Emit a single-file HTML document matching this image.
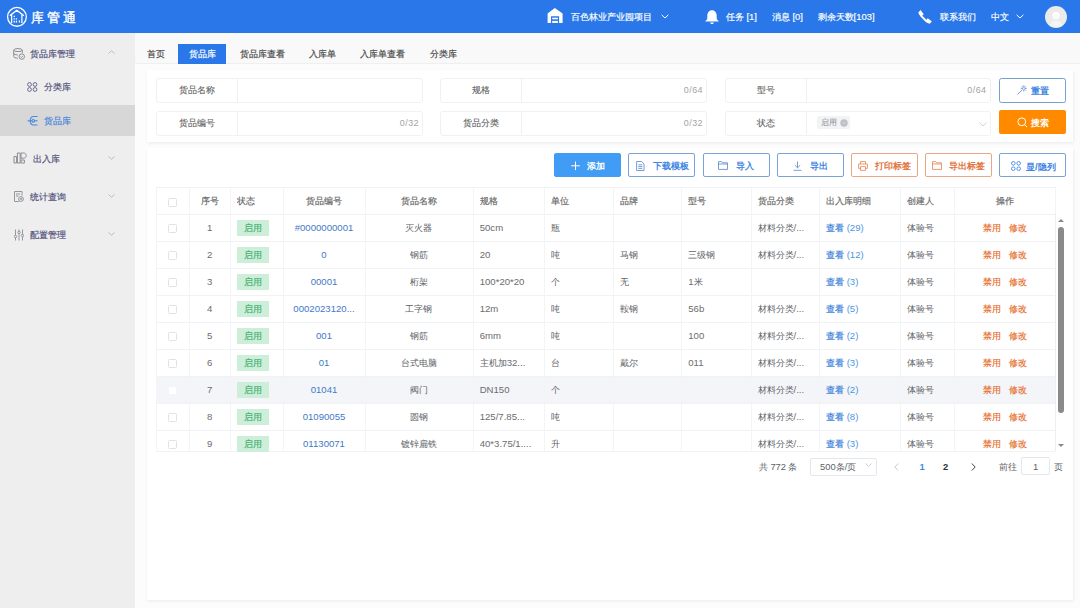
<!DOCTYPE html>
<html><head><meta charset="utf-8">
<style>
*{box-sizing:border-box;margin:0;padding:0}
html,body{width:1080px;height:608px;overflow:hidden;background:#f7f7f7;font-family:"Liberation Sans",sans-serif;font-size:8.7px;color:#606266}
.l{font-size:1.09em}
.abs{position:absolute}
#hdr{position:absolute;left:0;top:0;width:1080px;height:33.4px;background:#2977e8;color:#fff}
#hdr .t{position:absolute;top:10px;line-height:14px;font-size:8.7px;-webkit-text-stroke-width:0.18px;color:#fff;white-space:nowrap}
#side{position:absolute;left:0;top:33px;width:135px;height:575px;background:#eeeeee}
#side .it{position:absolute;line-height:14px;font-size:8.8px;-webkit-text-stroke-width:0.18px;color:#52527c;white-space:nowrap}
#content{position:absolute;left:135px;top:33px;width:945px;height:575px;background:#fcfcfc}
#tabs{position:absolute;left:135px;top:33px;width:945px;height:31px;background:#f9f9f9;border-bottom:1px solid #efefef}
.tab{position:absolute;top:11px;height:20px;line-height:20px;font-size:8.7px;-webkit-text-stroke-width:0.18px;color:#4a4a4a;text-align:center;white-space:nowrap}
.tab.on{background:#2977e8;color:#fff}
.card{position:absolute;background:#fff;box-shadow:0.5px 1px 3px 0.5px rgba(0,0,0,.06)}
.fld{position:absolute;height:25px;border:1px solid #f1f1f3;border-radius:3px;background:#fff}
.fld .lb{position:absolute;left:0;top:0;width:81px;height:23px;line-height:23px;text-align:center;border-right:1px solid #f0f0f2;color:#626262;-webkit-text-stroke-width:0.1px;font-size:8.7px}
.fld .cnt{position:absolute;right:3px;top:0;line-height:23px;font-size:8.2px;letter-spacing:0.45px;color:#a3a3a3}
.btn{position:absolute;top:152.5px;width:67px;height:24px;border:1px solid #79a3d8;border-radius:2px;background:#fff;color:#3f86e3;font-weight:bold;font-size:8.8px;line-height:23px;white-space:nowrap}
.btn.o{border-color:#e8a888;color:#e2743e}
.btn svg{position:absolute}
.btn>span{position:absolute;top:1.6px}
#tbl .hl{position:absolute;left:155.8px;width:899.5px;height:1px;background:#f1f2f4}
#tbl .vl{position:absolute;top:187px;width:1px;height:264px;background:#f3f4f6}
.cell{position:absolute;height:27px;line-height:28.6px;font-size:8.8px;color:#606266;white-space:nowrap;overflow:hidden}
.cell.c{text-align:center}
.cell:not(.blue):not(.lnk) .l{color:#6c6c6e}
.cell.th{color:#6a6a6a;-webkit-text-stroke-width:0.18px;font-size:8.6px}
.cell.blue{color:#4479c8}
.cell.lnk{color:#4f95e0}
.vw{font-weight:normal;-webkit-text-stroke-width:0.2px;color:#3f86dc}
.or{color:#e8702f;-webkit-text-stroke-width:0.18px}
.cb{position:absolute;width:9px;height:9px;border:1px solid #e2e2e6;border-radius:1.5px;background:#fff}
.cb.w{border-color:#f3f5f9}
.tag{position:absolute;width:32px;height:15.5px;line-height:17px;background:#cdeed9;color:#46b072;text-align:center;font-size:8.8px;-webkit-text-stroke-width:0.18px}
</style></head><body>
<div id="content"></div>
<div id="hdr">
  <svg class="abs" style="left:6px;top:6px" width="22" height="22" viewBox="0 0 22 22">
    <circle cx="10.95" cy="10.85" r="9.4" fill="none" stroke="#fff" stroke-width="1.3"/>
    <path d="M4.3 9.2L10.8 4.2L17.3 9.2" fill="none" stroke="#fff" stroke-width="1.4" stroke-linejoin="round" stroke-linecap="round"/>
    <path d="M5.6 8.4V16.9M15.9 8.4V16.9" fill="none" stroke="#fff" stroke-width="1.3"/>
    <path d="M7.6 9.8h1.3v1.3h-1.3zM7.6 12.3h1.3v1.3h-1.3zM9.8 12.3h1.3v1.3h-1.3zM7.6 14.8h1.3v1.6h-1.3zM9.8 14.8h1.3v1.6h-1.3zM12.8 14.6h1.3v1.8h-1.3z" fill="#fff"/>
  </svg>
  <div class="abs" style="left:30.5px;top:9.5px;font-size:13px;letter-spacing:3.4px;line-height:16px;color:#fff;-webkit-text-stroke-width:0.4px">库管通</div>
  <svg class="abs" style="left:547px;top:8px" width="16" height="16" viewBox="0 0 16 16">
    <path d="M7.8 0.1L15.6 5.4V15H12.1V8.2H4V15H0.6V5.4Z" fill="#fff"/>
    <rect x="5.2" y="9.7" width="5.7" height="1.6" fill="#fff"/><rect x="5.2" y="12.9" width="5.7" height="2.1" fill="#fff"/>
  </svg>
  <div class="t" style="left:571px">百色林业产业园项目</div>
  <svg class="abs" style="left:661px;top:14px" width="8" height="5" viewBox="0 0 8 5"><path d="M0.6 0.8L4 4L7.4 0.8" fill="none" stroke="#fff" stroke-width="1"/></svg>
  <svg class="abs" style="left:704.5px;top:9.5px" width="14" height="15" viewBox="0 0 14 15">
    <path d="M7 0.2C10.1 0.2 11.7 2.7 11.7 5.8V8.9L13.9 11.5H0.1L2.3 8.9V5.8C2.3 2.7 3.9 0.2 7 0.2Z" fill="#fff"/>
    <path d="M5.2 12.6h3.6c-.2 1-.9 1.6-1.8 1.6s-1.6-.6-1.8-1.6z" fill="#fff"/>
  </svg>
  <div class="t" style="left:726px">任务 <span class="l">[1]</span></div>
  <div class="t" style="left:772px">消息 <span class="l">[0]</span></div>
  <div class="t" style="left:817.5px">剩余天数<span class="l">[103]</span></div>
  <svg class="abs" style="left:918px;top:10px" width="15" height="14" viewBox="0 0 15 14">
    <path d="M0.3 2.4L2.6 0.1L5.7 4.3L4.3 5.7L8.4 9.7L9.8 8.3L13.9 11.4L11.7 13.7C9.6 13.2 7.6 12 5.3 9.4L4 8C2.2 6 0.8 4.4 0.3 2.4Z" fill="#fff"/>
  </svg>
  <div class="t" style="left:940px">联系我们</div>
  <div class="t" style="left:991px">中文</div>
  <svg class="abs" style="left:1015.5px;top:14px" width="8" height="5" viewBox="0 0 8 5"><path d="M0.6 0.8L4 4L7.4 0.8" fill="none" stroke="#fff" stroke-width="1"/></svg>
  <svg class="abs" style="left:1045px;top:5.5px" width="22" height="22" viewBox="0 0 22 22">
    <circle cx="11" cy="11" r="11" fill="#ebebeb"/>
    <circle cx="11" cy="9.4" r="3.6" fill="#fdfdfd"/>
    <path d="M5 19c.9-3 3.2-4.8 6-4.8s5.1 1.8 6 4.8c-1.6 1.4-3.7 2.1-6 2.1s-4.4-.7-6-2.1z" fill="#f4f4f4"/>
  </svg>
</div>
<div id="side">
  <div class="abs" style="left:0;top:72.3px;width:135px;height:30.4px;background:#d7d7d7"></div>
  <svg class="abs" style="left:12.5px;top:14.5px" width="12" height="12" viewBox="0 0 12 12" fill="none" stroke="#8c8c94" stroke-width="1">
    <ellipse cx="5" cy="2.1" rx="4.3" ry="1.5"/><path d="M0.7 2.1v6.6c0 .8 1.8 1.5 4.1 1.5"/><path d="M9.3 2.1v3"/><path d="M0.7 5.4c0 .8 1.8 1.5 4.2 1.5"/>
    <circle cx="8.8" cy="8.6" r="2.7" fill="#eee"/><path d="M7.6 8.7l.9.8 1.4-1.5"/>
  </svg>
  <div class="it" style="left:30px;top:14px">货品库管理</div>
  <svg class="abs" style="left:108px;top:17px" width="7" height="4" viewBox="0 0 7 4"><path d="M0.5 3.5L3.5 0.7L6.5 3.5" fill="none" stroke="#b0b0b0" stroke-width="0.8"/></svg>
  <svg class="abs" style="left:27px;top:48.5px" width="10.5" height="10" viewBox="0 0 10.5 10" fill="none" stroke="#6a6a98" stroke-width="1">
    <circle cx="2.5" cy="2.5" r="1.9"/><circle cx="8" cy="2.5" r="1.9"/><circle cx="2.5" cy="7.5" r="1.9"/><circle cx="8" cy="7.5" r="1.9"/>
  </svg>
  <div class="it" style="left:43.5px;top:47px">分类库</div>
  <svg class="abs" style="left:27px;top:81.5px" width="12" height="12" viewBox="0 0 12 12" fill="none" stroke="#4a88e0" stroke-width="1.1">
    <path d="M10.5 1.5H6.8C4.6 1.5 3.2 3.3 3.2 5.7S4.6 10 6.8 10h3.7"/><path d="M0.6 5.8h9.9"/><circle cx="6.2" cy="5.8" r="1.3" fill="#d7d7d7"/>
  </svg>
  <div class="it" style="left:43.5px;top:81px;color:#4a86dc">货品库</div>
  <svg class="abs" style="left:13px;top:119px" width="14" height="12" viewBox="0 0 14 12" fill="none" stroke="#8c8c94" stroke-width="1">
    <path d="M1 4.5h2.6v6.5H1z"/><path d="M4.4 1h2.8v10H4.4z"/><path d="M8 1h2.6c1.6 0 2.6 1.2 2.6 2.6S12.2 6.2 10.6 6.2H8z"/><path d="M8 8h3.4v3H8z"/>
  </svg>
  <div class="it" style="left:33px;top:119px">出入库</div>
  <svg class="abs" style="left:108px;top:122.5px" width="7" height="4" viewBox="0 0 7 4"><path d="M0.5 0.5L3.5 3.3L6.5 0.5" fill="none" stroke="#b0b0b0" stroke-width="0.8"/></svg>
  <svg class="abs" style="left:14px;top:158px" width="10" height="11" viewBox="0 0 10 11" fill="none" stroke="#8c8c94" stroke-width="0.9">
    <path d="M5 10.5H0.5V0.5h7.5v4"/><path d="M2 3h4M2 5h2.5"/><circle cx="7" cy="8" r="2.4"/><path d="M6.4 7.2v1.6M7.6 6.8v2"/>
  </svg>
  <div class="it" style="left:30px;top:157px">统计查询</div>
  <svg class="abs" style="left:108px;top:160.5px" width="7" height="4" viewBox="0 0 7 4"><path d="M0.5 0.5L3.5 3.3L6.5 0.5" fill="none" stroke="#b0b0b0" stroke-width="0.8"/></svg>
  <svg class="abs" style="left:13.5px;top:195.5px" width="10" height="12" viewBox="0 0 10 12" fill="none" stroke="#8c8c94" stroke-width="0.9">
    <path d="M1.5 0.5v11M5 0.5v11M8.5 0.5v11"/><circle cx="1.5" cy="7.5" r="1.2" fill="#eee"/><circle cx="5" cy="3.5" r="1.2" fill="#eee"/><circle cx="8.5" cy="6.5" r="1.2" fill="#eee"/>
  </svg>
  <div class="it" style="left:30px;top:195px">配置管理</div>
  <svg class="abs" style="left:108px;top:198.5px" width="7" height="4" viewBox="0 0 7 4"><path d="M0.5 0.5L3.5 3.3L6.5 0.5" fill="none" stroke="#b0b0b0" stroke-width="0.8"/></svg>
</div>
<div id="tabs">
  <div class="tab" style="left:12px;width:17px">首页</div>
  <div class="tab on" style="left:43px;width:48px">货品库</div>
  <div class="tab" style="left:104px;width:46px">货品库查看</div>
  <div class="tab" style="left:173px;width:28px">入库单</div>
  <div class="tab" style="left:224px;width:46px">入库单查看</div>
  <div class="tab" style="left:294px;width:28px">分类库</div>
</div>
<div class="card" style="left:147px;top:70px;width:925.5px;height:71.5px"></div>
<div class="fld" style="left:156px;top:78px;width:267px"><div class="lb">货品名称</div></div>
<div class="fld" style="left:156px;top:110.5px;width:267px"><div class="lb">货品编号</div><div class="cnt"><span class="l">0/32</span></div></div>
<div class="fld" style="left:440px;top:78px;width:267px"><div class="lb">规格</div><div class="cnt"><span class="l">0/64</span></div></div>
<div class="fld" style="left:440px;top:110.5px;width:267px"><div class="lb">货品分类</div><div class="cnt"><span class="l">0/32</span></div></div>
<div class="fld" style="left:725px;top:78px;width:265.5px"><div class="lb">型号</div><div class="cnt"><span class="l">0/64</span></div></div>
<div class="fld" style="left:725px;top:110.5px;width:265.5px"><div class="lb">状态</div>
  <div class="abs" style="left:91px;top:4.5px;width:33px;height:13px;background:#f2f3f5;border-radius:2px;font-size:8px;line-height:13.5px;color:#8a8a8e;padding-left:3.5px">启用</div>
  <svg class="abs" style="left:113.5px;top:7px" width="8" height="8" viewBox="0 0 8 8"><circle cx="4" cy="4" r="3.7" fill="#c0c0c4"/><path d="M2.7 2.7l2.6 2.6M5.3 2.7L2.7 5.3" stroke="#d8d8dc" stroke-width="0.6"/></svg>
  <svg class="abs" style="left:253px;top:10px" width="8" height="5" viewBox="0 0 8 5"><path d="M0.5 0.6L4 4L7.5 0.6" fill="none" stroke="#c8c8c8" stroke-width="0.8"/></svg>
</div>
<div class="abs" style="left:999px;top:78px;width:67px;height:24.5px;border:1px solid #74a0d4;border-radius:2.5px;background:#fff"></div>
<svg class="abs" style="left:1016.5px;top:85px" width="10" height="10" viewBox="0 0 10 10" fill="none" stroke="#5a86c4" stroke-width="0.8" stroke-linecap="round">
  <path d="M0.7 9.3L5.2 4.8"/><path d="M6.8 0.6v1.6M6.8 4.6v1.6M4.2 3.4h1.6M7.8 3.4h1.6M4.9 1.5l.9.9M8.7 1.5l-.9.9M8.7 5.3l-.9-.9"/>
</svg>
<div class="abs" style="left:1031px;top:84.5px;font-size:8.8px;line-height:13px;color:#3f86e3;font-weight:bold">重置</div>
<div class="abs" style="left:999px;top:110px;width:67px;height:24px;border-radius:2px;background:#ff8a00"></div>
<svg class="abs" style="left:1016.5px;top:116.5px" width="11" height="11" viewBox="0 0 11 11" fill="none" stroke="#fff" stroke-width="1">
  <circle cx="4.8" cy="4.8" r="3.9"/><path d="M7.6 7.6L10 10"/>
</svg>
<div class="abs" style="left:1031px;top:116.5px;font-size:8.8px;line-height:13px;color:#fff;font-weight:bold">搜索</div>

<div class="card" style="left:147px;top:147.5px;width:925.5px;height:452.5px"></div>
<div class="btn" style="left:554px;background:#419cf6;border-color:#419cf6;color:#fff">
  <svg style="left:15.5px;top:7px" width="10" height="10" viewBox="0 0 10 10"><path d="M4.5 0.5v8.6M0.2 4.8h8.6" stroke="#fff" stroke-width="1"/></svg>
  <span style="left:32px">添加</span>
</div>
<div class="btn" style="left:628px">
  <svg style="left:7px;top:7px" width="9" height="10" viewBox="0 0 9 10" fill="none" stroke="#5d8dcf" stroke-width="0.85"><path d="M0.6 0.5h5l2.4 2.4v6.6H0.6z"/><path d="M2.3 3.8h4M2.3 5.6h4M2.3 7.4h4"/></svg>
  <span style="left:23.5px">下载模板</span>
</div>
<div class="btn" style="left:702.5px">
  <svg style="left:14.5px;top:7px" width="10" height="9" viewBox="0 0 10 9" fill="none" stroke="#5d8dcf" stroke-width="0.85"><path d="M0.5 0.6h3.2l1 1.2h4.8v6.6H0.5z"/><path d="M0.5 3h9"/></svg>
  <span style="left:32px">导入</span>
</div>
<div class="btn" style="left:776.5px">
  <svg style="left:15.5px;top:7px" width="9" height="10" viewBox="0 0 9 10" fill="none" stroke="#5d8dcf" stroke-width="0.85"><path d="M4.5 0.5v6.2M1.8 4.2l2.7 2.6 2.7-2.6M0.5 9.3h8"/></svg>
  <span style="left:32.5px">导出</span>
</div>
<div class="btn o" style="left:850.5px">
  <svg style="left:6.5px;top:7px" width="10" height="10" viewBox="0 0 10 10" fill="none" stroke="#e58a5a" stroke-width="0.85"><path d="M2.5 3V0.6h5V3"/><path d="M2.5 7.4H0.6V3h8.8v4.4H7.5"/><path d="M2.5 5.6h5v3.8h-5z"/></svg>
  <span style="left:23.5px">打印标签</span>
</div>
<div class="btn o" style="left:925px">
  <svg style="left:5.5px;top:7.5px" width="10" height="9" viewBox="0 0 10 9" fill="none" stroke="#e58a5a" stroke-width="0.85"><path d="M0.5 0.6h3.2l1 1.2h4.8v6.6H0.5z"/><path d="M0.5 3h9"/></svg>
  <span style="left:23px">导出标签</span>
</div>
<div class="btn" style="left:999px">
  <svg style="left:11px;top:7px" width="10" height="10" viewBox="0 0 10 10" fill="none" stroke="#4a8ee8" stroke-width="0.95"><circle cx="2.3" cy="2.3" r="1.8"/><circle cx="7.7" cy="2.3" r="1.8"/><circle cx="2.3" cy="7.7" r="1.8"/><circle cx="7.7" cy="7.7" r="1.8"/></svg>
  <span style="left:26px">显<span class="l">/</span>隐列</span>
</div>
<div id="tbl">
<div class="abs" style="left:155.8px;top:376px;width:899.5px;height:27px;background:#f3f5f9"></div>
<div class="hl" style="top:187px"></div>
<div class="hl" style="top:214px"></div>
<div class="hl" style="top:241px"></div>
<div class="hl" style="top:268px"></div>
<div class="hl" style="top:295px"></div>
<div class="hl" style="top:322px"></div>
<div class="hl" style="top:349px"></div>
<div class="hl" style="top:376px"></div>
<div class="hl" style="top:403px"></div>
<div class="hl" style="top:430px"></div>
<div class="hl" style="top:451px"></div>
<div class="vl" style="left:155.8px"></div>
<div class="vl" style="left:189.4px"></div>
<div class="vl" style="left:229.9px"></div>
<div class="vl" style="left:283px"></div>
<div class="vl" style="left:365px"></div>
<div class="vl" style="left:472.7px"></div>
<div class="vl" style="left:543.6px"></div>
<div class="vl" style="left:612.8px"></div>
<div class="vl" style="left:681.3px"></div>
<div class="vl" style="left:750.5px"></div>
<div class="vl" style="left:819.2px"></div>
<div class="vl" style="left:900.4px"></div>
<div class="vl" style="left:954px"></div>
<div class="vl" style="left:1055.3px"></div>
<div class="cb" style="left:168px;top:197.5px"></div>
<div class="cell c th" style="left:189.4px;top:187px;width:40.5px">序号</div>
<div class="cell th" style="left:236.9px;top:187px;width:46.099999999999994px">状态</div>
<div class="cell c th" style="left:283px;top:187px;width:82px">货品编号</div>
<div class="cell c th" style="left:365px;top:187px;width:107.69999999999999px">货品名称</div>
<div class="cell th" style="left:479.7px;top:187px;width:63.900000000000034px">规格</div>
<div class="cell th" style="left:550.6px;top:187px;width:62.19999999999993px">单位</div>
<div class="cell th" style="left:619.8px;top:187px;width:61.5px">品牌</div>
<div class="cell th" style="left:688.3px;top:187px;width:62.200000000000045px">型号</div>
<div class="cell th" style="left:757.5px;top:187px;width:61.700000000000045px">货品分类</div>
<div class="cell th" style="left:826.2px;top:187px;width:74.19999999999993px">出入库明细</div>
<div class="cell th" style="left:907.4px;top:187px;width:46.60000000000002px">创建人</div>
<div class="cell c th" style="left:954px;top:187px;width:101.29999999999995px">操作</div>
<div class="cb" style="left:168px;top:224px"></div>
<div class="cell c " style="left:189.4px;top:214px;width:40.5px"><span class="l">1</span></div>
<div class="tag" style="left:237px;top:220px">启用</div>
<div class="cell c blue" style="left:283px;top:214px;width:82px"><span class="l">#0000000001</span></div>
<div class="cell c " style="left:365px;top:214px;width:107.69999999999999px">灭火器</div>
<div class="cell " style="left:479.7px;top:214px;width:63.900000000000034px"><span class="l">50cm</span></div>
<div class="cell " style="left:550.6px;top:214px;width:62.19999999999993px">瓶</div>
<div class="cell " style="left:619.8px;top:214px;width:61.5px"></div>
<div class="cell " style="left:688.3px;top:214px;width:62.200000000000045px"></div>
<div class="cell " style="left:757.5px;top:214px;width:61.700000000000045px">材料分类<span class="l">/...</span></div>
<div class="cell lnk" style="left:826.2px;top:214px;width:74.19999999999993px"><b class="vw">查看</b> <span class="l">(29)</span></div>
<div class="cell " style="left:907.4px;top:214px;width:46.60000000000002px">体验号</div>
<div class="cell c " style="left:954px;top:214px;width:101.29999999999995px"><span class="or">禁用</span><span class="or" style="margin-left:8px">修改</span></div>
<div class="cb" style="left:168px;top:251px"></div>
<div class="cell c " style="left:189.4px;top:241px;width:40.5px"><span class="l">2</span></div>
<div class="tag" style="left:237px;top:247px">启用</div>
<div class="cell c blue" style="left:283px;top:241px;width:82px"><span class="l">0</span></div>
<div class="cell c " style="left:365px;top:241px;width:107.69999999999999px">钢筋</div>
<div class="cell " style="left:479.7px;top:241px;width:63.900000000000034px"><span class="l">20</span></div>
<div class="cell " style="left:550.6px;top:241px;width:62.19999999999993px">吨</div>
<div class="cell " style="left:619.8px;top:241px;width:61.5px">马钢</div>
<div class="cell " style="left:688.3px;top:241px;width:62.200000000000045px">三级钢</div>
<div class="cell " style="left:757.5px;top:241px;width:61.700000000000045px">材料分类<span class="l">/...</span></div>
<div class="cell lnk" style="left:826.2px;top:241px;width:74.19999999999993px"><b class="vw">查看</b> <span class="l">(12)</span></div>
<div class="cell " style="left:907.4px;top:241px;width:46.60000000000002px">体验号</div>
<div class="cell c " style="left:954px;top:241px;width:101.29999999999995px"><span class="or">禁用</span><span class="or" style="margin-left:8px">修改</span></div>
<div class="cb" style="left:168px;top:278px"></div>
<div class="cell c " style="left:189.4px;top:268px;width:40.5px"><span class="l">3</span></div>
<div class="tag" style="left:237px;top:274px">启用</div>
<div class="cell c blue" style="left:283px;top:268px;width:82px"><span class="l">00001</span></div>
<div class="cell c " style="left:365px;top:268px;width:107.69999999999999px">桁架</div>
<div class="cell " style="left:479.7px;top:268px;width:63.900000000000034px"><span class="l">100*20*20</span></div>
<div class="cell " style="left:550.6px;top:268px;width:62.19999999999993px">个</div>
<div class="cell " style="left:619.8px;top:268px;width:61.5px">无</div>
<div class="cell " style="left:688.3px;top:268px;width:62.200000000000045px"><span class="l">1</span>米</div>
<div class="cell " style="left:757.5px;top:268px;width:61.700000000000045px"></div>
<div class="cell lnk" style="left:826.2px;top:268px;width:74.19999999999993px"><b class="vw">查看</b> <span class="l">(3)</span></div>
<div class="cell " style="left:907.4px;top:268px;width:46.60000000000002px">体验号</div>
<div class="cell c " style="left:954px;top:268px;width:101.29999999999995px"><span class="or">禁用</span><span class="or" style="margin-left:8px">修改</span></div>
<div class="cb" style="left:168px;top:305px"></div>
<div class="cell c " style="left:189.4px;top:295px;width:40.5px"><span class="l">4</span></div>
<div class="tag" style="left:237px;top:301px">启用</div>
<div class="cell c blue" style="left:283px;top:295px;width:82px"><span class="l">0002023120...</span></div>
<div class="cell c " style="left:365px;top:295px;width:107.69999999999999px">工字钢</div>
<div class="cell " style="left:479.7px;top:295px;width:63.900000000000034px"><span class="l">12m</span></div>
<div class="cell " style="left:550.6px;top:295px;width:62.19999999999993px">吨</div>
<div class="cell " style="left:619.8px;top:295px;width:61.5px">鞍钢</div>
<div class="cell " style="left:688.3px;top:295px;width:62.200000000000045px"><span class="l">56b</span></div>
<div class="cell " style="left:757.5px;top:295px;width:61.700000000000045px">材料分类<span class="l">/...</span></div>
<div class="cell lnk" style="left:826.2px;top:295px;width:74.19999999999993px"><b class="vw">查看</b> <span class="l">(5)</span></div>
<div class="cell " style="left:907.4px;top:295px;width:46.60000000000002px">体验号</div>
<div class="cell c " style="left:954px;top:295px;width:101.29999999999995px"><span class="or">禁用</span><span class="or" style="margin-left:8px">修改</span></div>
<div class="cb" style="left:168px;top:332px"></div>
<div class="cell c " style="left:189.4px;top:322px;width:40.5px"><span class="l">5</span></div>
<div class="tag" style="left:237px;top:328px">启用</div>
<div class="cell c blue" style="left:283px;top:322px;width:82px"><span class="l">001</span></div>
<div class="cell c " style="left:365px;top:322px;width:107.69999999999999px">钢筋</div>
<div class="cell " style="left:479.7px;top:322px;width:63.900000000000034px"><span class="l">6mm</span></div>
<div class="cell " style="left:550.6px;top:322px;width:62.19999999999993px">吨</div>
<div class="cell " style="left:619.8px;top:322px;width:61.5px"></div>
<div class="cell " style="left:688.3px;top:322px;width:62.200000000000045px"><span class="l">100</span></div>
<div class="cell " style="left:757.5px;top:322px;width:61.700000000000045px">材料分类<span class="l">/...</span></div>
<div class="cell lnk" style="left:826.2px;top:322px;width:74.19999999999993px"><b class="vw">查看</b> <span class="l">(2)</span></div>
<div class="cell " style="left:907.4px;top:322px;width:46.60000000000002px">体验号</div>
<div class="cell c " style="left:954px;top:322px;width:101.29999999999995px"><span class="or">禁用</span><span class="or" style="margin-left:8px">修改</span></div>
<div class="cb" style="left:168px;top:359px"></div>
<div class="cell c " style="left:189.4px;top:349px;width:40.5px"><span class="l">6</span></div>
<div class="tag" style="left:237px;top:355px">启用</div>
<div class="cell c blue" style="left:283px;top:349px;width:82px"><span class="l">01</span></div>
<div class="cell c " style="left:365px;top:349px;width:107.69999999999999px">台式电脑</div>
<div class="cell " style="left:479.7px;top:349px;width:63.900000000000034px">主机加<span class="l">32...</span></div>
<div class="cell " style="left:550.6px;top:349px;width:62.19999999999993px">台</div>
<div class="cell " style="left:619.8px;top:349px;width:61.5px">戴尔</div>
<div class="cell " style="left:688.3px;top:349px;width:62.200000000000045px"><span class="l">011</span></div>
<div class="cell " style="left:757.5px;top:349px;width:61.700000000000045px">材料分类<span class="l">/...</span></div>
<div class="cell lnk" style="left:826.2px;top:349px;width:74.19999999999993px"><b class="vw">查看</b> <span class="l">(3)</span></div>
<div class="cell " style="left:907.4px;top:349px;width:46.60000000000002px">体验号</div>
<div class="cell c " style="left:954px;top:349px;width:101.29999999999995px"><span class="or">禁用</span><span class="or" style="margin-left:8px">修改</span></div>
<div class="cb w" style="left:168px;top:386px"></div>
<div class="cell c " style="left:189.4px;top:376px;width:40.5px"><span class="l">7</span></div>
<div class="tag" style="left:237px;top:382px">启用</div>
<div class="cell c blue" style="left:283px;top:376px;width:82px"><span class="l">01041</span></div>
<div class="cell c " style="left:365px;top:376px;width:107.69999999999999px">阀门</div>
<div class="cell " style="left:479.7px;top:376px;width:63.900000000000034px"><span class="l">DN150</span></div>
<div class="cell " style="left:550.6px;top:376px;width:62.19999999999993px">个</div>
<div class="cell " style="left:619.8px;top:376px;width:61.5px"></div>
<div class="cell " style="left:688.3px;top:376px;width:62.200000000000045px"></div>
<div class="cell " style="left:757.5px;top:376px;width:61.700000000000045px">材料分类<span class="l">/...</span></div>
<div class="cell lnk" style="left:826.2px;top:376px;width:74.19999999999993px"><b class="vw">查看</b> <span class="l">(2)</span></div>
<div class="cell " style="left:907.4px;top:376px;width:46.60000000000002px">体验号</div>
<div class="cell c " style="left:954px;top:376px;width:101.29999999999995px"><span class="or">禁用</span><span class="or" style="margin-left:8px">修改</span></div>
<div class="cb" style="left:168px;top:413px"></div>
<div class="cell c " style="left:189.4px;top:403px;width:40.5px"><span class="l">8</span></div>
<div class="tag" style="left:237px;top:409px">启用</div>
<div class="cell c blue" style="left:283px;top:403px;width:82px"><span class="l">01090055</span></div>
<div class="cell c " style="left:365px;top:403px;width:107.69999999999999px">圆钢</div>
<div class="cell " style="left:479.7px;top:403px;width:63.900000000000034px"><span class="l">125/7.85...</span></div>
<div class="cell " style="left:550.6px;top:403px;width:62.19999999999993px">吨</div>
<div class="cell " style="left:619.8px;top:403px;width:61.5px"></div>
<div class="cell " style="left:688.3px;top:403px;width:62.200000000000045px"></div>
<div class="cell " style="left:757.5px;top:403px;width:61.700000000000045px">材料分类<span class="l">/...</span></div>
<div class="cell lnk" style="left:826.2px;top:403px;width:74.19999999999993px"><b class="vw">查看</b> <span class="l">(8)</span></div>
<div class="cell " style="left:907.4px;top:403px;width:46.60000000000002px">体验号</div>
<div class="cell c " style="left:954px;top:403px;width:101.29999999999995px"><span class="or">禁用</span><span class="or" style="margin-left:8px">修改</span></div>
<div class="cb" style="left:168px;top:440px"></div>
<div class="cell c " style="left:189.4px;top:430px;width:40.5px"><span class="l">9</span></div>
<div class="tag" style="left:237px;top:436px">启用</div>
<div class="cell c blue" style="left:283px;top:430px;width:82px"><span class="l">01130071</span></div>
<div class="cell c " style="left:365px;top:430px;width:107.69999999999999px">镀锌扁铁</div>
<div class="cell " style="left:479.7px;top:430px;width:63.900000000000034px"><span class="l">40*3.75/1....</span></div>
<div class="cell " style="left:550.6px;top:430px;width:62.19999999999993px">升</div>
<div class="cell " style="left:619.8px;top:430px;width:61.5px"></div>
<div class="cell " style="left:688.3px;top:430px;width:62.200000000000045px"></div>
<div class="cell " style="left:757.5px;top:430px;width:61.700000000000045px">材料分类<span class="l">/...</span></div>
<div class="cell lnk" style="left:826.2px;top:430px;width:74.19999999999993px"><b class="vw">查看</b> <span class="l">(3)</span></div>
<div class="cell " style="left:907.4px;top:430px;width:46.60000000000002px">体验号</div>
<div class="cell c " style="left:954px;top:430px;width:101.29999999999995px"><span class="or">禁用</span><span class="or" style="margin-left:8px">修改</span></div>
<div class="abs" style="left:1055.3px;top:214px;width:9.5px;height:237px;background:#fff;border-left:1px solid #ebeef5"></div>
<div class="abs" style="left:1058px;top:219px;width:0;height:0;border-left:3px solid transparent;border-right:3px solid transparent;border-bottom:3.5px solid #888"></div>
<div class="abs" style="left:1058px;top:443.5px;width:0;height:0;border-left:3px solid transparent;border-right:3px solid transparent;border-top:3.5px solid #888"></div>
<div class="abs" style="left:1057.8px;top:227px;width:6px;height:186px;background:#8a8a8a;border-radius:3px"></div>
</div>
<div class="abs" style="left:759px;top:460px;line-height:14px;font-size:8.6px;color:#606266;white-space:nowrap">共 <span class="l">772</span> 条</div>
<div class="abs" style="left:809.5px;top:457.5px;width:67px;height:18.5px;border:1px solid #e4e7ed;border-radius:2px;background:#fff"></div>
<div class="abs" style="left:820px;top:460px;line-height:14px;font-size:8.6px;color:#606266;white-space:nowrap"><span class="l">500</span>条<span class="l">/</span>页</div>
<svg class="abs" style="left:865px;top:463px" width="7" height="4" viewBox="0 0 7 4"><path d="M0.5 0.5L3.5 3.3L6.5 0.5" fill="none" stroke="#c0c4cc" stroke-width="0.8"/></svg>
<svg class="abs" style="left:894px;top:463px" width="5" height="8" viewBox="0 0 5 8"><path d="M4.2 0.5L0.8 4L4.2 7.5" fill="none" stroke="#c0c4cc" stroke-width="0.9"/></svg>
<div class="abs" style="left:919.5px;top:460px;line-height:14px;font-size:8.6px;color:#3a8ee6;font-weight:bold"><span class="l">1</span></div>
<div class="abs" style="left:943px;top:460px;line-height:14px;font-size:8.6px;color:#303133;font-weight:bold"><span class="l">2</span></div>
<svg class="abs" style="left:970.5px;top:463px" width="5" height="8" viewBox="0 0 5 8"><path d="M0.8 0.5L4.2 4L0.8 7.5" fill="none" stroke="#303133" stroke-width="0.9"/></svg>
<div class="abs" style="left:999px;top:460px;line-height:14px;font-size:8.6px;color:#606266">前往</div>
<div class="abs" style="left:1020.5px;top:456.5px;width:29.5px;height:18.5px;border:1px solid #e4e7ed;border-radius:2px;background:#fff"></div>
<div class="abs" style="left:1033px;top:460px;line-height:14px;font-size:8.6px;color:#606266"><span class="l">1</span></div>
<div class="abs" style="left:1054px;top:460px;line-height:14px;font-size:8.6px;color:#606266">页</div>
</body></html>
